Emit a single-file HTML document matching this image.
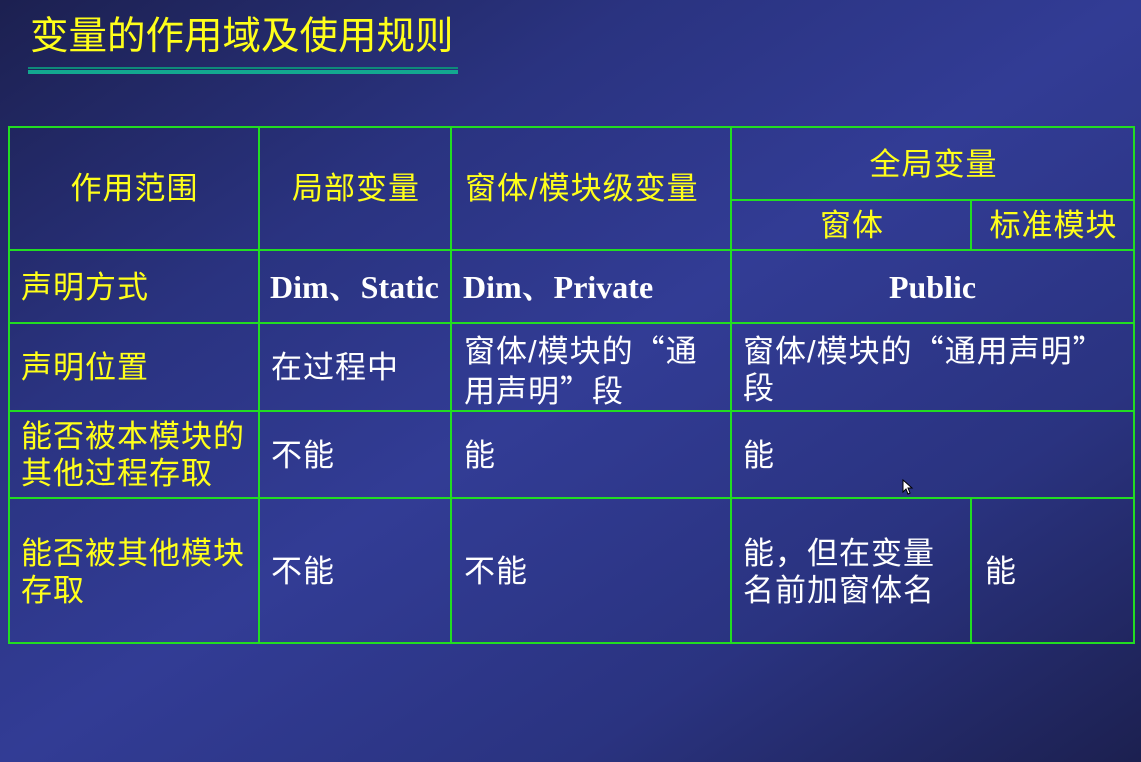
<!DOCTYPE html>
<html><head><meta charset="utf-8"><style>
html,body{margin:0;padding:0}
body{width:1141px;height:762px;position:relative;overflow:hidden;
background:linear-gradient(to bottom right,#1c2050 0%,#2a3380 28%,#323c95 50%,#2a3380 75%,#1c2050 100%);
font-family:"Liberation Sans","Noto Sans CJK SC","WenQuanYi Zen Hei",sans-serif;}
.t{position:absolute;font-size:31px;line-height:37px;white-space:nowrap;color:#fff;letter-spacing:1px}
.y{color:#ffff1a}
.c{text-align:center}
.q{font-family:"Noto Sans CJK SC",sans-serif}
.b{font-family:"Liberation Serif","Noto Serif CJK SC",serif;font-weight:bold;font-size:32px;letter-spacing:0}
.h{position:absolute;background:#22dd22;height:2px}
.v{position:absolute;background:#22dd22;width:2px}
</style></head><body>
<div class="t y" style="left:30px;top:15px;font-size:38.5px;line-height:44px;letter-spacing:0">变量的作用域及使用规则</div>
<div style="position:absolute;left:28px;top:67px;width:430px;height:2px;background:#0e8a7a"></div>
<div style="position:absolute;left:28px;top:70px;width:430px;height:4px;background:#13a890"></div>

<div class="h" style="left:8px;top:126px;width:1127px"></div>
<div class="h" style="left:731px;top:199px;width:404px"></div>
<div class="h" style="left:8px;top:249px;width:1127px"></div>
<div class="h" style="left:8px;top:322px;width:1127px"></div>
<div class="h" style="left:8px;top:410px;width:1127px"></div>
<div class="h" style="left:8px;top:497px;width:1127px"></div>
<div class="h" style="left:8px;top:642px;width:1127px"></div>
<div class="v" style="left:8px;top:126px;height:518px"></div>
<div class="v" style="left:258px;top:126px;height:518px"></div>
<div class="v" style="left:450px;top:126px;height:518px"></div>
<div class="v" style="left:730px;top:126px;height:518px"></div>
<div class="v" style="left:970px;top:199px;height:52px"></div>
<div class="v" style="left:970px;top:497px;height:147px"></div>
<div class="v" style="left:1133px;top:126px;height:518px"></div>

<div class="t y c" style="left:9px;width:251px;top:170px">作用范围</div>
<div class="t y c" style="left:260px;width:192px;top:170px">局部变量</div>
<div class="t y" style="left:465px;top:170px">窗体/模块级变量</div>
<div class="t y c" style="left:732px;width:403px;top:146px">全局变量</div>
<div class="t y c" style="left:732px;width:240px;top:207px">窗体</div>
<div class="t y c" style="left:972px;width:163px;top:207px">标准模块</div>

<div class="t y" style="left:21px;top:269px">声明方式</div>
<div class="t b" style="left:270px;top:269px">Dim、Static</div>
<div class="t b" style="left:463px;top:269px">Dim、Private</div>
<div class="t b c" style="left:731px;width:403px;top:269px">Public</div>

<div class="t y" style="left:21px;top:349px">声明位置</div>
<div class="t" style="left:271px;top:349px">在过程中</div>
<div class="t" style="left:464px;top:330px">窗体/模块的<span class="q">“</span>通<br>用声明<span class="q">”</span>段</div>
<div class="t" style="left:743px;top:330px">窗体/模块的<span class="q">“</span>通用声明<span class="q">”</span><br>段</div>

<div class="t y" style="left:21px;top:418px">能否被本模块的<br>其他过程存取</div>
<div class="t" style="left:271px;top:437px">不能</div>
<div class="t" style="left:464px;top:437px">能</div>
<div class="t" style="left:743px;top:437px">能</div>

<div class="t y" style="left:21px;top:535px">能否被其他模块<br>存取</div>
<div class="t" style="left:271px;top:553px">不能</div>
<div class="t" style="left:464px;top:553px">不能</div>
<div class="t" style="left:743px;top:535px">能，但在变量<br>名前加窗体名</div>
<div class="t" style="left:985px;top:553px">能</div>

<svg style="position:absolute;left:902px;top:479px" width="12" height="16" viewBox="0 0 12 16"><path d="M1 1 L1 13 L4 10 L6 15 L8 14 L6 9 L10 9 Z" fill="#fff" stroke="#000" stroke-width="1"/></svg>
</body></html>
